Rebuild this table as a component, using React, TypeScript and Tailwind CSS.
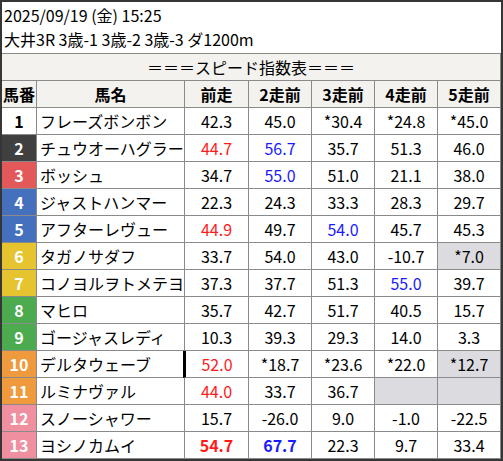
import React from 'react';

type Cell = { v: string; c?: 'r' | 'b'; bold?: boolean; gray?: boolean };

const rows: { no: number; bg: string; fg: string; name: string; cells: Cell[]; mark?: boolean }[] = [
  { no: 1, bg: 'bg-white', fg: 'text-black', name: 'フレーズボンボン', cells: [{ v: '42.3' }, { v: '45.0' }, { v: '*30.4' }, { v: '*24.8' }, { v: '*45.0' }] },
  { no: 2, bg: 'bg-[#404040]', fg: 'text-white', name: 'チュウオーハグラー', cells: [{ v: '44.7', c: 'r' }, { v: '56.7', c: 'b' }, { v: '35.7' }, { v: '51.3' }, { v: '46.0' }] },
  { no: 3, bg: 'bg-[#e35858]', fg: 'text-white', name: 'ボッシュ', cells: [{ v: '34.7' }, { v: '55.0', c: 'b' }, { v: '51.0' }, { v: '21.1' }, { v: '38.0' }] },
  { no: 4, bg: 'bg-[#4470bd]', fg: 'text-white', name: 'ジャストハンマー', cells: [{ v: '22.3' }, { v: '24.3' }, { v: '33.3' }, { v: '28.3' }, { v: '29.7' }] },
  { no: 5, bg: 'bg-[#4470bd]', fg: 'text-white', name: 'アフターレヴュー', cells: [{ v: '44.9', c: 'r' }, { v: '49.7' }, { v: '54.0', c: 'b' }, { v: '45.7' }, { v: '45.3' }] },
  { no: 6, bg: 'bg-[#e6c430]', fg: 'text-white', name: 'タガノサダフ', cells: [{ v: '33.7' }, { v: '54.0' }, { v: '43.0' }, { v: '-10.7' }, { v: '*7.0', gray: true }] },
  { no: 7, bg: 'bg-[#e6c430]', fg: 'text-white', name: 'コノヨルヲトメテヨ', cells: [{ v: '37.3' }, { v: '37.7' }, { v: '51.3' }, { v: '55.0', c: 'b' }, { v: '39.7' }] },
  { no: 8, bg: 'bg-[#4caa4f]', fg: 'text-white', name: 'マヒロ', cells: [{ v: '35.7' }, { v: '42.7' }, { v: '51.7' }, { v: '40.5' }, { v: '15.7' }] },
  { no: 9, bg: 'bg-[#4caa4f]', fg: 'text-white', name: 'ゴージャスレディ', cells: [{ v: '10.3' }, { v: '39.3' }, { v: '29.3' }, { v: '14.0' }, { v: '3.3' }] },
  { no: 10, bg: 'bg-[#ef9a3c]', fg: 'text-white', name: 'デルタウェーブ', mark: true, cells: [{ v: '52.0', c: 'r' }, { v: '*18.7' }, { v: '*23.6' }, { v: '*22.0' }, { v: '*12.7', gray: true }] },
  { no: 11, bg: 'bg-[#ef9a3c]', fg: 'text-white', name: 'ルミナヴァル', cells: [{ v: '44.0', c: 'r' }, { v: '33.7' }, { v: '36.7' }, { v: '', gray: true }, { v: '', gray: true }] },
  { no: 12, bg: 'bg-[#ef8fa0]', fg: 'text-white', name: 'スノーシャワー', cells: [{ v: '15.7' }, { v: '-26.0' }, { v: '9.0' }, { v: '-1.0' }, { v: '-22.5' }] },
  { no: 13, bg: 'bg-[#ef8fa0]', fg: 'text-white', name: 'ヨシノカムイ', cells: [{ v: '54.7', c: 'r', bold: true }, { v: '67.7', c: 'b', bold: true }, { v: '22.3' }, { v: '9.7' }, { v: '33.4' }] },
];

const heads = ['前走', '2走前', '3走前', '4走前', '5走前'];
const grid = 'grid grid-cols-[35px_148px_64px_63px_63px_63px_1fr]';
const line = 'border-[#8a8a8a]';

export default function App() {
  return (
    <div
      className="w-[503px] h-[461px] border-t-2 border-l-2 border-r-2 border-b-2 border-[#363636] bg-white text-black text-[16px] overflow-hidden"
      style={{ fontFamily: '"Noto Sans CJK JP", "Noto Sans", sans-serif' }}
    >
      {/* race info */}
      <div className={`h-[52px] border-b ${line} pl-[2px] pt-[1px] leading-[24px]`}>
        <div>2025/09/19 (金) 15:25</div>
        <div>大井3R 3歳-1 3歳-2 3歳-3 ダ1200m</div>
      </div>

      <div className={`h-[27px] border-b border-r ${line} bg-[#f3f2ee] flex items-center justify-center`}>
        ＝＝＝スピード指数表＝＝＝
      </div>

      <div className={`${grid} h-[27px] bg-[#f3f2ee] font-bold`}>
        <div className={`border-r border-b ${line} flex items-center justify-center`}>馬番</div>
        <div className={`border-r border-b ${line} flex items-center justify-center`}>馬名</div>
        {heads.map(h => (
          <div key={h} className={`border-r border-b ${line} flex items-center justify-center`}>{h}</div>
        ))}
      </div>

      {rows.map(r => (
        <div key={r.no} className={`${grid} h-[27px]`}>
          <div className={`border-r border-b ${line} ${r.bg} ${r.fg} font-bold flex items-center justify-center`}>{r.no}</div>
          <div className={`border-r border-b ${line} flex items-center pl-[3px] whitespace-nowrap`}>{r.name}</div>
          {r.cells.map((c, i) => (
            <div
              key={i}
              className={`border-r border-b ${line} flex items-center justify-center ${c.gray ? 'bg-[#dcdce0]' : ''} ${c.c === 'r' ? 'text-[#ff1a1a]' : c.c === 'b' ? 'text-[#1a1aff]' : ''} ${c.bold ? 'font-bold' : ''} ${i === 0 && r.mark ? 'border-l-[3px] border-l-black -ml-[2px]' : ''}`}
            >
              {c.v}
            </div>
          ))}
        </div>
      ))}
    </div>
  );
}
